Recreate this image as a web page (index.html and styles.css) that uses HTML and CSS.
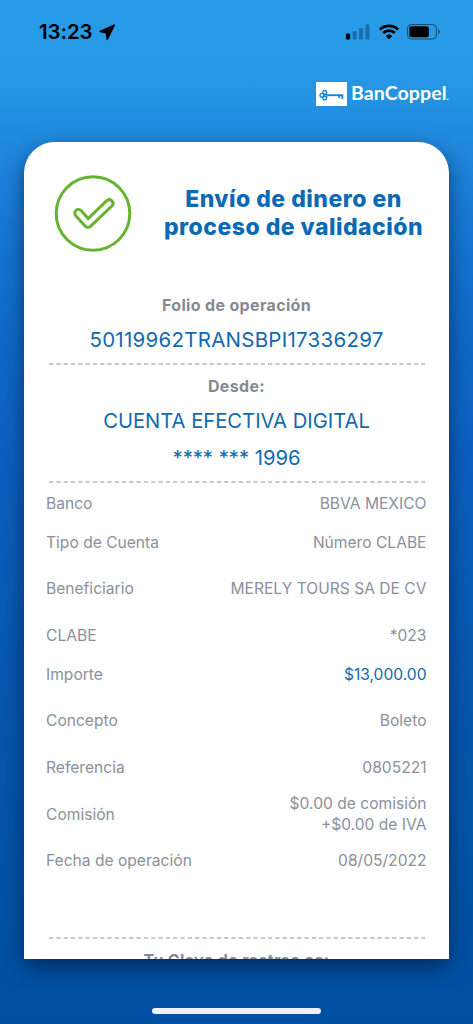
FILE: index.html
```
<!DOCTYPE html>
<html lang="es">
<head>
<meta charset="utf-8">
<title>BanCoppel</title>
<link rel="stylesheet" href="styles.css">
</head>
<body>
<div class="screen">
  <header class="status">
    <div class="clock">
      <span class="time">13:23</span>
      <svg class="locate" width="17" height="17" viewBox="0 0 17 17"><path d="M15.200 1.200 8.200 15.300 7.600 8.900 1.200 7.500z" stroke="#000" stroke-width="1.600" stroke-linejoin="round"/></svg>
    </div>
    <div class="indicators">
      <svg width="25" height="16" viewBox="0 0 25 16"><rect x="0" y="9.500" width="4.200" height="6" rx="1.300"/><g opacity=".28"><rect x="6.700" y="7" width="4" height="8.500" rx="1.200"/><rect x="13" y="4" width="4" height="11.500" rx="1.200"/><rect x="19.500" y=".5" width="4" height="15" rx="1.200"/></g></svg>
      <svg width="20" height="16" viewBox="0 0 20 16" fill="none" stroke="#000" stroke-width="2.700"><path d="M.9 5.600a13.200 13.200 0 0 1 18.200 0"/><path d="M4.200 9a8.500 8.500 0 0 1 11.600 0"/><path d="M10 15.300 6.800 12a4.700 4.700 0 0 1 6.400 0z" fill="#000" stroke="none"/></svg>
      <svg width="34" height="16" viewBox="0 0 34 16"><rect x=".5" y=".5" width="29" height="14.500" rx="4" fill="none" stroke="#000" stroke-opacity=".5"/><rect x="2.300" y="2.300" width="19.500" height="11" rx="2"/><path d="M31.300 5.300c2 .8 2 4 0 4.800z" opacity=".5"/></svg>
    </div>
  </header>
  <div class="brand">
    <svg class="brand-mark" width="31" height="24" viewBox="0 0 31 24"><rect width="31" height="24" fill="#fff"/><g fill="none" stroke="#1c83d0" stroke-width="1.300"><circle cx="8.700" cy="10.400" r="1.900"/><circle cx="5.900" cy="13.200" r="1.900"/><circle cx="8.700" cy="15.900" r="1.900"/><circle cx="9.800" cy="13.200" r="1.400"/><path d="M11.200 13.200h16" stroke-width="1.900"/><path d="M23.200 13v3M26.300 13v4" stroke-width="1.800"/></g></svg>
    <span class="wordmark">BanCoppel<i>.</i></span>
  </div>
  <main class="card">
    <section class="heading">
      <svg class="ok" width="78" height="78" viewBox="0 0 78 78" fill="none" stroke="#65b32e" stroke-width="3"><circle cx="39" cy="38.500" r="36.800"/><path d="M27.100 35.600a3.500 3.500 0 0 0-5.300 5.100l9.500 10.500a3.600 3.600 0 0 0 5.200.1l21.600-20.500a3.700 3.700 0 0 0-5.100-5.300L34.100 43.500z"/></svg>
      <h1><span>Envío de dinero en</span><span>proceso de validación</span></h1>
    </section>
    <section class="folio">
      <h2 class="label">Folio de operación</h2>
      <p class="value number">50119962TRANSBPI17336297</p>
    </section>
    <svg class="rule" width="376" height="2"><path d="M0 1H376"/></svg>
    <section class="source">
      <h2 class="label">Desde:</h2>
      <p class="value account">CUENTA EFECTIVA DIGITAL</p>
      <p class="value">**** *** 1996</p>
    </section>
    <svg class="rule" width="376" height="2"><path d="M0 1H376"/></svg>
    <dl class="details">
      <dt>Banco</dt><dd>BBVA MEXICO</dd>
      <dt>Tipo de Cuenta</dt><dd>Número CLABE</dd>
      <dt>Beneficiario</dt><dd>MERELY TOURS SA DE CV</dd>
      <dt>CLABE</dt><dd>*023</dd>
      <dt>Importe</dt><dd class="amount">$13,000.00</dd>
      <dt>Concepto</dt><dd>Boleto</dd>
      <dt>Referencia</dt><dd>0805221</dd>
      <dt>Comisión</dt><dd>$0.00 de comisión<br>+$0.00 de IVA</dd>
      <dt>Fecha de operación</dt><dd>08/05/2022</dd>
    </dl>
    <svg class="rule" width="376" height="2"><path d="M0 1H376"/></svg>
    <h2 class="label tracking">Tu Clave de rastreo es:</h2>
  </main>
  <div class="home"></div>
</div>
</body>
</html>
```
FILE: styles.css
```
* { box-sizing: border-box; margin: 0; padding: 0; }
body { font-family: Inter, "Liberation Sans", sans-serif; }
.screen {
  width: 473px; height: 1024px; overflow: hidden;
  display: flex; flex-direction: column;
  background: linear-gradient(#289ce9 0, #279ae7 65px, #218bdf 130px, #1878d2 225px, #1069c7 330px, #0b5fbd 480px, #0758b0 650px, #0353a7 850px, #004fa2 1024px);
}
.status { height: 64px; padding: 0 32px 0 39px; display: flex; justify-content: space-between; align-items: center; }
.clock { display: flex; align-items: center; gap: 6px; }
.time { font-size: 20.5px; font-weight: 600; letter-spacing: -.1px; line-height: 24px; }
.indicators { display: flex; align-items: center; gap: 8px; }
.brand { height: 78px; padding: 18px 24px 0 316px; display: flex; gap: 4px; }
.brand-mark { flex: none; }
.wordmark { font-family: Lato, sans-serif; font-weight: 700; font-size: 19.500px; line-height: 22px; letter-spacing: .1px; color: #fff; white-space: nowrap; }
.wordmark i { font-size: 9px; font-style: normal; }
.card {
  width: 425px; height: 816.5px; margin-left: 24px; flex: none; overflow: hidden;
  display: flex; flex-direction: column;
  background: #fff; border-radius: 31px 31px 0 0;
  box-shadow: 0 8px 20px rgba(0, 20, 50, .6);
}
.heading { height: 153px; padding: 33px 0 0 30px; display: flex; gap: 26px; flex: none; }
.ok { flex: none; }
h1 { width: 271px; padding-top: 11px; display: flex; flex-direction: column; align-items: center; color: #0b6ab3; font-size: 23px; font-weight: 800; letter-spacing: .48px; line-height: 27.500px; white-space: nowrap; }
.label { height: 20px; text-align: center; color: #838995; font-size: 16px; font-weight: 700; letter-spacing: .34px; line-height: 20px; white-space: nowrap; }
.value { text-align: center; color: #1269b0; font-size: 20.200px; line-height: 37px; white-space: nowrap; }
.folio { height: 67.5px; flex: none; }
.number { padding-top: 9.500px; line-height: 30px; font-size: 20.500px; letter-spacing: .26px; }
.rule { margin-left: 25px; flex: none; }
.rule path { stroke: #b5b7b9; stroke-width: 1.5; stroke-dasharray: 4.300 3; }
.source { height: 116px; padding-top: 11px; flex: none; }
.account { padding-top: 6px; }
.details {
  display: grid; grid-template-columns: auto 1fr; flex: none;
  grid-template-rows: 39px 39px 54px 40px 38px 54px 40px 53px 39px;
  padding: 1px 22.5px 0 22px; align-items: center; height: 454px;
  color: #8b909b; font-size: 15.600px; line-height: 21px; white-space: nowrap;
}
dd { text-align: right; }
.details .amount { color: #1269b0; }
.tracking { padding-top: 11px; height: 34px; }
.home { width: 169px; height: 6px; margin: 49.5px auto 0; flex: none; border-radius: 3px; background: #f1effa; }
```
